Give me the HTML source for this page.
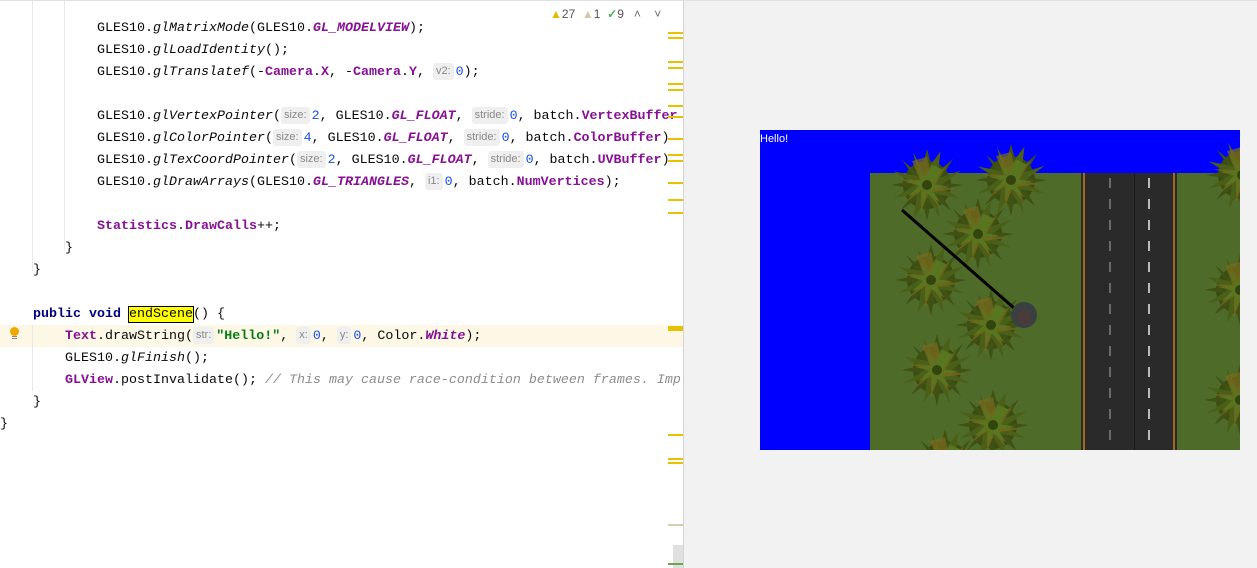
<!DOCTYPE html>
<html><head><meta charset="utf-8"><style>
body{margin:0;width:1257px;height:567px;overflow:hidden;background:#fff;position:relative;font-family:"Liberation Mono",monospace;}
.ed{position:absolute;left:0;top:0;width:683px;height:567px;background:#fff;border-top:1px solid #e0e0e0;}
.rp{position:absolute;left:683px;top:0;width:574px;height:567px;background:#f2f2f2;border-left:1px solid #d4d4d4;border-top:1px solid #e0e0e0;}
.ln{position:absolute;left:0;height:22px;line-height:22px;font-size:13.33px;color:#080808;white-space:pre;}
.f{font-style:italic;color:#080808}
.k{font-weight:bold;color:#000080}
.c{color:#871094;font-weight:bold}
.ci{color:#871094;font-style:italic;font-weight:bold}
.n{color:#1750eb}
.s{color:#067d17;font-weight:bold}
.cm{color:#8c8c8c;font-style:italic}
.h{display:inline-block;background:#efefef;color:#888;font-family:"Liberation Sans",sans-serif;font-size:11px;line-height:17px;border-radius:3px;padding:0 3px;vertical-align:1px;margin-right:2px}
.g{position:absolute;width:1px;background:#e8e8e8}
.m{position:absolute;left:668px;width:15px;height:2px;background:#e6c200}
</style></head><body>
<div class="ed">
<div style="position:absolute;left:0;top:324px;width:683px;height:22px;background:#fcf8e5"></div>
<div class="g" style="left:32px;top:0;height:270px"></div>
<div class="g" style="left:64px;top:0;height:248px"></div>
<div class="g" style="left:32px;top:324px;height:66px"></div>
<div class="ln" style="top:17px;left:97px">GLES10.<span class="f">glMatrixMode</span>(GLES10.<span class="ci">GL_MODELVIEW</span>);</div>
<div class="ln" style="top:39px;left:97px">GLES10.<span class="f">glLoadIdentity</span>();</div>
<div class="ln" style="top:61px;left:97px">GLES10.<span class="f">glTranslatef</span>(-<span class="c">Camera</span>.<span class="c">X</span>, -<span class="c">Camera</span>.<span class="c">Y</span>, <span class="h">v2:</span><span class="n">0</span>);</div>
<div class="ln" style="top:105px;left:97px">GLES10.<span class="f">glVertexPointer</span>(<span class="h">size:</span><span class="n">2</span>, GLES10.<span class="ci">GL_FLOAT</span>, <span class="h">stride:</span><span class="n">0</span>, batch.<span class="c">VertexBuffer</span></div>
<div class="ln" style="top:127px;left:97px">GLES10.<span class="f">glColorPointer</span>(<span class="h">size:</span><span class="n">4</span>, GLES10.<span class="ci">GL_FLOAT</span>, <span class="h">stride:</span><span class="n">0</span>, batch.<span class="c">ColorBuffer</span>)</div>
<div class="ln" style="top:149px;left:97px">GLES10.<span class="f">glTexCoordPointer</span>(<span class="h">size:</span><span class="n">2</span>, GLES10.<span class="ci">GL_FLOAT</span>, <span class="h">stride:</span><span class="n">0</span>, batch.<span class="c">UVBuffer</span>)</div>
<div class="ln" style="top:171px;left:97px">GLES10.<span class="f">glDrawArrays</span>(GLES10.<span class="ci">GL_TRIANGLES</span>, <span class="h">i1:</span><span class="n">0</span>, batch.<span class="c">NumVertices</span>);</div>
<div class="ln" style="top:215px;left:97px"><span class="c">Statistics</span>.<span class="c">DrawCalls</span>++;</div>
<div class="ln" style="top:237px;left:65px">}</div>
<div class="ln" style="top:259px;left:33px">}</div>
<div class="ln" style="top:303px;left:33px"><span class="k">public void </span><span style="background:#ffff00;outline:1px solid #000">endScene</span>() {</div>
<div class="ln" style="top:325px;left:65px"><span class="c">Text</span>.drawString(<span class="h">str:</span><span class="s">"Hello!"</span>, <span class="h">x:</span><span class="n">0</span>, <span class="h">y:</span><span class="n">0</span>, Color.<span class="ci">White</span>);</div>
<div class="ln" style="top:347px;left:65px">GLES10.<span class="f">glFinish</span>();</div>
<div class="ln" style="top:369px;left:65px"><span class="c">GLView</span>.postInvalidate(); <span class="cm">// This may cause race-condition between frames. Impl</span></div>
<div class="ln" style="top:391px;left:33px">}</div>
<div class="ln" style="top:413px;left:0">}</div>
<div style="position:absolute;left:10px;top:326px;width:9px;height:9px;border-radius:50%;background:#f0a800"></div>
<div style="position:absolute;left:12px;top:335px;width:5px;height:1px;background:#888;box-shadow:0 2px 0 #888"></div>
<div style="position:absolute;left:550px;top:6px;font-family:'Liberation Sans',sans-serif;font-size:12px;color:#555;white-space:pre"><span style="color:#e6b800">▲</span>27  <span style="color:#d4c8a8">▲</span>1  <span style="color:#4caf50;font-weight:bold">✓</span>9   <span style="color:#666">˄</span>    <span style="color:#666">˅</span></div>
<div class="m" style="top:31px"></div><div class="m" style="top:36px"></div>
<div class="m" style="top:60px"></div><div class="m" style="top:66px"></div>
<div class="m" style="top:82px"></div><div class="m" style="top:88px"></div>
<div class="m" style="top:104px"></div><div class="m" style="top:115px"></div>
<div class="m" style="top:137px"></div><div class="m" style="top:153px"></div>
<div class="m" style="top:159px"></div><div class="m" style="top:181px"></div>
<div class="m" style="top:198px"></div><div class="m" style="top:211px"></div>
<div class="m" style="top:325px;height:5px"></div>
<div class="m" style="top:433px"></div><div class="m" style="top:457px"></div><div class="m" style="top:461px"></div>
<div class="m" style="top:523px;background:#d6cfae"></div>
<div style="position:absolute;left:673px;top:544px;width:10px;height:23px;background:#e0e0e0"></div>
<div class="m" style="top:562px;background:#6aa84f"></div>
</div>
<div class="rp"></div>
<svg style="position:absolute;left:760px;top:130px" width="480" height="320" viewBox="0 0 480 320">
<defs>
<g id="p">
<circle r="24" fill="#3a4c12"/>
<polygon points="0,-36 7,-10 26,-26 12,-3 36,0 12,5 24,26 5,11 0,36 -6,11 -26,25 -11,4 -36,0 -11,-5 -25,-25 -7,-10" fill="#3f5214"/>
<polygon points="0,-36 7,-10 26,-26 12,-3 36,0 12,5 24,26 5,11 0,36 -6,11 -26,25 -11,4 -36,0 -11,-5 -25,-25 -7,-10" fill="#4a5f18" transform="rotate(22)"/>
<polygon points="0,-28 5,-6 20,-20 8,0 28,4 6,7 14,24 1,8 -6,28 -6,6 -22,18 -8,1 -28,-6 -7,-5 -15,-24" fill="#7a6b1e" opacity="0.7"/>
<polygon points="0,-22 4,-5 16,-14 6,0 22,3 5,6 10,18 0,6 -5,22 -5,5 -17,13 -6,0 -22,-5 -6,-4 -11,-18" fill="#58761f" transform="rotate(45)"/>
<circle r="5" fill="#34440e"/>
</g>
</defs>
<rect width="480" height="320" fill="#0000ff"/>
<rect x="110" y="43" width="370" height="277" fill="#4f6b2a"/>
<rect x="321" y="43" width="96" height="277" fill="#2a2a2a"/>
<rect x="323" y="43" width="2" height="277" fill="#a06a20"/>
<rect x="374" y="43" width="1" height="277" fill="#1a1a1a"/>
<rect x="413" y="43" width="2" height="277" fill="#a06a20"/>
<line x1="350" y1="48" x2="350" y2="320" stroke="#aaa" stroke-width="1" stroke-dasharray="10,11"/>
<line x1="389" y1="48" x2="389" y2="320" stroke="#bbb" stroke-width="2" stroke-dasharray="10,11"/>
<use href="#p" x="167" y="55"/><use href="#p" x="251" y="50"/>
<use href="#p" x="218" y="104"/><use href="#p" x="171" y="150"/>
<use href="#p" x="231" y="195"/><use href="#p" x="177" y="240"/>
<use href="#p" x="233" y="295"/><use href="#p" x="185" y="335"/>
<use href="#p" x="482" y="45"/><use href="#p" x="480" y="160"/><use href="#p" x="480" y="270"/>
<line x1="142" y1="80" x2="254" y2="178" stroke="#000" stroke-width="3"/>
<circle cx="264" cy="185" r="13" fill="#3a4040"/>
<circle cx="264" cy="187" r="7" fill="#4a3a3a"/>
<text x="0" y="12" font-family="Liberation Sans,sans-serif" font-size="11" fill="#fff">Hello!</text>
</svg>
</body></html>
